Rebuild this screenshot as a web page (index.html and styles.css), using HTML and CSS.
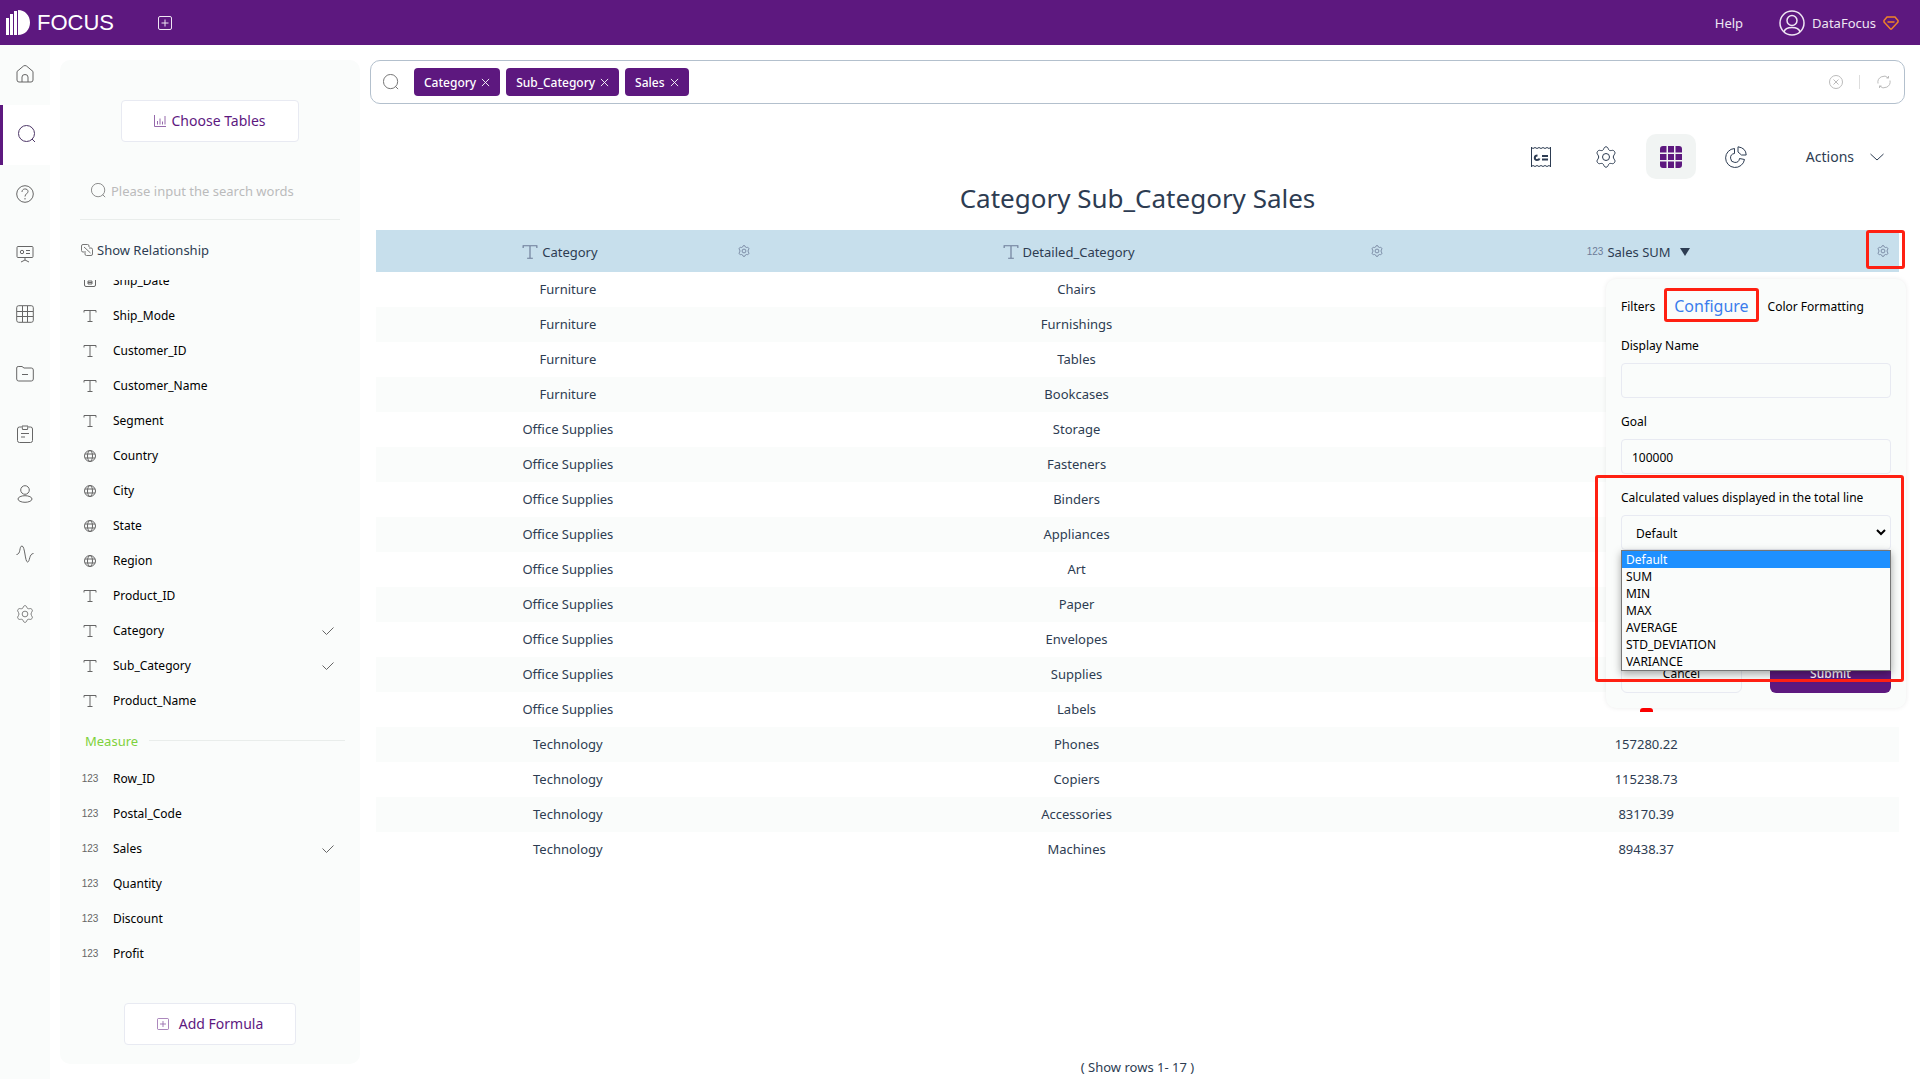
FILE: index.html
```html
<!DOCTYPE html>
<html lang="en">
<head>
<meta charset="utf-8">
<title>DataFocus</title>
<link rel="stylesheet" href="styles.css">
</head>
<body>
<svg class="sprite" aria-hidden="true">
  <symbol id="i-plus" viewBox="0 0 14 14"><rect x=".5" y=".5" width="13" height="13" rx="1.5"/><path d="M7 3.500v7M3.500 7h7"/></symbol>
  <symbol id="i-search" viewBox="0 0 18 18"><circle cx="8.500" cy="8.500" r="8"/><path d="M14 14l3 3"/></symbol>
  <symbol id="i-text" viewBox="0 0 14 14"><path d="M1 3.500V1.500h12v2M7 1.500v11M4.500 12.500h5"/></symbol>
  <symbol id="i-globe" viewBox="0 0 14 14"><circle cx="7" cy="7" r="5.500"/><ellipse cx="7" cy="7" rx="2.500" ry="5.500"/><path d="M2 5h10M2 9h10"/></symbol>
  <symbol id="i-check" viewBox="0 0 12 8"><path d="M.5 3.500l4 4 7-7"/></symbol>
  <symbol id="i-gear" viewBox="0 0 22 22"><path d="M11 .8C12.500.8 13 2 13.500 3.500 14.500 5 16 4.600 17.500 4.300c1.500 0 2.700 1.700 2.500 2.900-.4 1.300-1.700 2.400-1.700 3.800s1.300 2.500 1.700 3.800c.2 1.200-1 2.900-2.500 2.900-1.500-.3-3-.7-4 .8-.5 1.500-1 2.700-2.500 2.700s-2-1.200-2.500-2.700c-1-1.500-2.500-1.100-4-.8-1.500 0-2.700-1.700-2.500-2.900.4-1.300 1.700-2.400 1.700-3.800S2.400 8.500 2 7.200c-.2-1.200 1-2.900 2.500-2.900 1.500.3 3 .7 4-.8C9 2 9.500.8 11 .8z"/><circle cx="11" cy="11" r="3.500"/></symbol>
</svg>

<header class="topbar">
  <a class="brand" href="#" aria-label="Focus home">
    <svg class="brand-mark" viewBox="0 0 24 25"><path d="M0 8h3v17H0zM4 4h3v21H4zM8 1h3v24H8zM12 0c7 0 12 5.500 12 12.500S19 25 12 25z"/></svg>
    <span>FOCUS</span>
  </a>
  <button class="bare new-tab" aria-label="New"><svg class="icon s14"><use href="#i-plus"/></svg></button>
  <a class="help" href="#">Help</a>
  <a class="account" href="#">
    <svg class="icon avatar" viewBox="0 0 26 26"><circle cx="13" cy="13" r="12"/><circle cx="13" cy="10.500" r="5"/><path d="M5 22c1-4 5-4.500 8-4.500s7 .5 8 4.500"/></svg>
    <span>DataFocus</span>
    <svg class="icon gem" viewBox="0 0 16 14"><path d="M4 1h8l3 3.500v1.500L8.500 13h-1L1 6V4.500zM4.500 6h7"/></svg>
  </a>
</header>

<div class="shell">
  <nav class="rail" aria-label="Main">
    <a href="#" aria-label="Home"><svg class="icon s18" viewBox="0 0 18 18"><path d="M1 6.500L7.500 1q1.500-1 3 0L17 6.500V15q0 2-2 2H3q-2 0-2-2zM6 17v-5q0-2.500 3-2.500t3 2.500v5"/></svg></a>
    <a href="#" class="current" aria-label="Search"><svg class="icon s18"><use href="#i-search"/></svg></a>
    <a href="#" aria-label="Questions"><svg class="icon s18" viewBox="0 0 18 18"><circle cx="9" cy="9" r="8.300"/><path d="M6 7c0-4 6-4 6-.5C12 8.500 9 9 9 11.500M9 13v1.500"/></svg></a>
    <a href="#" aria-label="Boards"><svg class="icon s18" viewBox="0 0 18 18"><rect x="1" y="1.500" width="16" height="11" rx="1"/><circle cx="6" cy="7" r="1.700"/><path d="M10 5.500h4M10 8.500h4M9 12.500V15M5 17l4-2 4 2"/></svg></a>
    <a href="#" aria-label="Tables"><svg class="icon s18" viewBox="0 0 18 18"><rect x=".7" y=".7" width="16.600" height="16.600" rx="2"/><path d="M6.500 1v16M11.500 1v16M1 6.500h16M1 11.500h16"/></svg></a>
    <a href="#" aria-label="Folders"><svg class="icon s18" viewBox="0 0 18 18"><path d="M.7 3q0-1.500 1.500-1.500H6l2 1.500h7.300q2 0 2 2v9q0 2-2 2H2.700q-2 0-2-2zM6 9.500h6"/></svg></a>
    <a href="#" aria-label="Reports"><svg class="icon s18" viewBox="0 0 18 18"><path d="M5.500 2H3.500Q1.500 2 1.500 4v11.500q0 2 2 2h11q2 0 2-2V4q0-2-2-2h-2M6 1h6l-.5 3.500h-5zM5 8.500h8M5 12h4"/></svg></a>
    <a href="#" aria-label="Users"><svg class="icon s18" viewBox="0 0 18 18"><circle cx="9" cy="5" r="4.300"/><ellipse cx="9" cy="14" rx="7" ry="3.300"/></svg></a>
    <a href="#" aria-label="Activity"><svg class="icon s18" viewBox="0 0 18 18"><path d="M.5 9.500C5 9.500 3 1 6 1s3 16 5.500 16S13 8.500 17.500 8.500"/></svg></a>
    <a href="#" aria-label="Settings"><svg class="icon s18"><use href="#i-gear"/></svg></a>
  </nav>

  <aside class="panel">
    <button class="outline choose">
      <svg class="icon s12" viewBox="0 0 12 12"><path d="M.5 0v11.500H12M3.500 9.500V6M6 9.500V3.500M8.500 9.500V6.500M11 9.500V1"/></svg>
      Choose Tables
    </button>
    <label class="find">
      <svg class="icon s15"><use href="#i-search"/></svg>
      <input type="text" placeholder="Please input the search words" aria-label="Search columns">
    </label>
    <a class="relation" href="#">
      <svg class="icon s12" viewBox="0 0 12 12"><path d="M3 8H2Q.5 8 .5 6.500V2Q.5.500 2 .5h4.500Q8 .5 8 2v1M3 3l6.500 6M4 7v3q0 1.500 1.500 1.500H10q1.500 0 1.500-1.500V5.500Q11.500 4 10 4H8"/></svg>
      Show Relationship
    </a>
    <div class="columns">
      <ul class="fields first">
        <li><svg class="icon s14" viewBox="0 0 14 14"><rect x="1.500" y="1.500" width="11" height="11" rx="1.500"/><path d="M2 4.500h10M5 7h4v3H5zM5 8.500h4"/></svg>Ship_Date</li>
        <li><svg class="icon s14"><use href="#i-text"/></svg>Ship_Mode</li>
        <li><svg class="icon s14"><use href="#i-text"/></svg>Customer_ID</li>
        <li><svg class="icon s14"><use href="#i-text"/></svg>Customer_Name</li>
        <li><svg class="icon s14"><use href="#i-text"/></svg>Segment</li>
        <li><svg class="icon s14"><use href="#i-globe"/></svg>Country</li>
        <li><svg class="icon s14"><use href="#i-globe"/></svg>City</li>
        <li><svg class="icon s14"><use href="#i-globe"/></svg>State</li>
        <li><svg class="icon s14"><use href="#i-globe"/></svg>Region</li>
        <li><svg class="icon s14"><use href="#i-text"/></svg>Product_ID</li>
        <li><svg class="icon s14"><use href="#i-text"/></svg>Category<svg class="icon tick"><use href="#i-check"/></svg></li>
        <li><svg class="icon s14"><use href="#i-text"/></svg>Sub_Category<svg class="icon tick"><use href="#i-check"/></svg></li>
        <li><svg class="icon s14"><use href="#i-text"/></svg>Product_Name</li>
      </ul>
      <h2 class="group">Measure</h2>
      <ul class="fields">
        <li><span class="num">123</span>Row_ID</li>
        <li><span class="num">123</span>Postal_Code</li>
        <li><span class="num">123</span>Sales<svg class="icon tick"><use href="#i-check"/></svg></li>
        <li><span class="num">123</span>Quantity</li>
        <li><span class="num">123</span>Discount</li>
        <li><span class="num">123</span>Profit</li>
      </ul>
    </div>
    <button class="outline formula"><svg class="icon s12"><use href="#i-plus"/></svg>Add Formula</button>
  </aside>

  <main class="main">
    <div class="query">
      <svg class="icon s16"><use href="#i-search"/></svg>
      <div class="tags">
        <button class="tag">Category<svg class="icon s9" viewBox="0 0 10 10"><path d="M1 1l8 8M9 1l-8 8"/></svg></button>
        <button class="tag">Sub_Category<svg class="icon s9" viewBox="0 0 10 10"><path d="M1 1l8 8M9 1l-8 8"/></svg></button>
        <button class="tag">Sales<svg class="icon s9" viewBox="0 0 10 10"><path d="M1 1l8 8M9 1l-8 8"/></svg></button>
      </div>
      <button class="bare" aria-label="Clear"><svg class="icon s14" viewBox="0 0 14 14"><circle cx="7" cy="7" r="6.500"/><path d="M4.500 4.500l5 5M9.500 4.500l-5 5"/></svg></button>
      <span class="divider"></span>
      <button class="bare" aria-label="Refresh"><svg class="icon s14" viewBox="0 0 14 14"><path d="M1 8.500A6.200 6.200 0 0 1 11.500 3V1M11.500 3h-2M13 5.500A6.200 6.200 0 0 1 2.500 11v2M2.500 11h2"/></svg></button>
    </div>

    <div class="tools">
      <button class="tool" aria-label="Formula"><svg class="icon s22" viewBox="0 0 22 22"><path d="M1.500 1v20M20.500 1v20M1.500 1.500l1.500 1 2-1 2 1 2-1 2 1 2-1 2 1 2-1 2 1 1.500-1M1.500 20.500l1.500-1 2 1 2-1 2 1 2-1 2 1 2-1 2 1 2-1 1.500 1"/><path class="thick" d="M7.500 9.500C4 9.500 4 14 7 14q2 0 2.500-1.500M12 10h6M12 13.500h6"/></svg></button>
      <button class="tool" aria-label="Settings"><svg class="icon s22"><use href="#i-gear"/></svg></button>
      <button class="tool on" aria-label="Table view"><svg class="s22" viewBox="0 0 22 22"><path d="M3 0h3.500v6.500H0V3q0-3 3-3zM8 0h6v6.500H8zM15.500 0H19q3 0 3 3v3.500h-6.500zM0 8h6.500v6H0zM8 8h6v6H8zM15.500 8H22v6h-6.500zM0 15.500h6.500V22H3q-3 0-3-3zM8 15.500h6V22H8zM15.500 15.500H22V19q0 3-3 3h-3.500z"/></svg></button>
      <button class="tool" aria-label="Chart view"><svg class="icon s22" viewBox="0 0 22 22"><path d="M9.500 2.500A9.500 9.500 0 1 0 19.500 13.500L14.500 12.500A4.500 4.500 0 1 1 9.500 7.500zM13 .8V6l3.500 3h4.700Q21 2 13 .8z"/></svg></button>
      <button class="actions">Actions<svg class="icon" viewBox="0 0 14 8" width="14" height="8"><path d="M.5 1L7 7l6.500-6"/></svg></button>
    </div>

    <h1 class="title">Category Sub_Category Sales</h1>

    <div class="grid-wrap">
      <table class="grid">
        <colgroup><col class="c1"><col class="c2"><col class="c3"></colgroup>
        <thead>
          <tr>
            <th><div class="head"><span class="label"><svg class="icon s16"><use href="#i-text"/></svg>Category</span><button class="bare" aria-label="Configure Category"><svg class="icon s12"><use href="#i-gear"/></svg></button></div></th>
            <th><div class="head"><span class="label"><svg class="icon s16"><use href="#i-text"/></svg>Detailed_Category</span><button class="bare" aria-label="Configure Detailed_Category"><svg class="icon s12"><use href="#i-gear"/></svg></button></div></th>
            <th><div class="head"><span class="label"><span class="num">123</span>Sales SUM<svg class="caret" viewBox="0 0 10 8"><path d="M0 0h10L5 8z"/></svg></span><button class="bare marked" aria-label="Configure Sales"><svg class="icon s12"><use href="#i-gear"/></svg></button></div></th>
          </tr>
        </thead>
        <tbody>
          <tr><td>Furniture</td><td>Chairs</td><td></td></tr>
          <tr><td>Furniture</td><td>Furnishings</td><td></td></tr>
          <tr><td>Furniture</td><td>Tables</td><td></td></tr>
          <tr><td>Furniture</td><td>Bookcases</td><td></td></tr>
          <tr><td>Office Supplies</td><td>Storage</td><td></td></tr>
          <tr><td>Office Supplies</td><td>Fasteners</td><td></td></tr>
          <tr><td>Office Supplies</td><td>Binders</td><td></td></tr>
          <tr><td>Office Supplies</td><td>Appliances</td><td></td></tr>
          <tr><td>Office Supplies</td><td>Art</td><td></td></tr>
          <tr><td>Office Supplies</td><td>Paper</td><td></td></tr>
          <tr><td>Office Supplies</td><td>Envelopes</td><td></td></tr>
          <tr><td>Office Supplies</td><td>Supplies</td><td></td></tr>
          <tr><td>Office Supplies</td><td>Labels</td><td></td></tr>
          <tr><td>Technology</td><td>Phones</td><td>157280.22</td></tr>
          <tr><td>Technology</td><td>Copiers</td><td>115238.73</td></tr>
          <tr><td>Technology</td><td>Accessories</td><td>83170.39</td></tr>
          <tr><td>Technology</td><td>Machines</td><td>89438.37</td></tr>
        </tbody>
      </table>

      <form class="popover">
        <div class="tabs">
          <button type="button" class="tab">Filters</button>
          <button type="button" class="tab active">Configure</button>
          <button type="button" class="tab">Color Formatting</button>
        </div>
        <label for="display-name">Display Name</label>
        <input id="display-name" type="text">
        <label for="goal">Goal</label>
        <input id="goal" type="text" value="100000">
        <div class="total">
          <label for="total">Calculated values displayed in the total line</label>
          <div class="picker">
            <select id="total"><option>Default</option><option>SUM</option><option>MIN</option><option>MAX</option><option>AVERAGE</option><option>STD_DEVIATION</option><option>VARIANCE</option></select>
            <svg class="icon arrow" viewBox="0 0 10 7"><path d="M1 1l4 4 4-4"/></svg>
            <ul class="options" role="listbox">
              <li role="option" aria-selected="true">Default</li>
              <li role="option">SUM</li>
              <li role="option">MIN</li>
              <li role="option">MAX</li>
              <li role="option">AVERAGE</li>
              <li role="option">STD_DEVIATION</li>
              <li role="option">VARIANCE</li>
            </ul>
          </div>
        </div>
        <div class="buttons">
          <button type="button" class="cancel">Cancel</button>
          <button type="submit" class="submit">Submit</button>
        </div>
      </form>
    </div>

    <p class="count">( Show rows 1- 17 )</p>
  </main>
</div>
</body>
</html>
```
FILE: styles.css
```css
:root {
  --purple: #5d187f;
  --soft: #fafcfb;
  --line: #e8eaf2;
  --ink: #2d3c52;
  --mark: #ff2012;
}

* { box-sizing: border-box; }

body {
  margin: 0;
  min-height: 100vh;
  display: flex;
  flex-direction: column;
  background: #fff;
  color: var(--ink);
  font: 13px/20px "Noto Sans", "Open Sans", sans-serif;
}

button, input, select { font: inherit; color: inherit; }
button { cursor: pointer; }
a { color: inherit; text-decoration: none; }
ul { list-style: none; margin: 0; padding: 0; }

.sprite { position: absolute; width: 0; height: 0; }
.icon { fill: none; stroke: currentColor; stroke-width: 1; flex: none; }
.s9 { width: 9px; height: 9px; }
.s12 { width: 12px; height: 12px; }
.s14 { width: 14px; height: 14px; }
.s15 { width: 15px; height: 15px; }
.s16 { width: 16px; height: 16px; }
.s18 { width: 18px; height: 18px; }
.s22 { width: 22px; height: 22px; }
.thick { stroke-width: 2; }

.bare { border: 0; padding: 0; background: none; display: flex; align-items: center; justify-content: center; }

/* top bar */
.topbar {
  height: 45px;
  padding: 0 21px 0 6px;
  display: flex;
  align-items: center;
  background: var(--purple);
  color: #efe6f3;
}
.brand { display: flex; align-items: center; gap: 7px; color: #fff; font: 22px/24px "Liberation Sans", Arial, sans-serif; }
.brand-mark { width: 24px; height: 25px; fill: #fff; }
.new-tab { margin-left: 44px; }
.help { margin-left: auto; }
.account { margin-left: 36px; display: flex; align-items: center; }
.avatar { width: 26px; height: 26px; margin-right: 7px; stroke-width: 1.500; }
.gem { width: 16px; height: 14px; margin-left: 7px; color: #f08228; stroke-width: 1.500; }

.shell { flex: 1; display: flex; }

/* icon rail */
.rail { width: 50px; background: var(--soft); color: #666; }
.rail a { height: 60px; padding-bottom: 2px; display: flex; align-items: center; justify-content: center; }
.rail .current { background: #fff; border-left: 3px solid var(--purple); color: #4c3566; }

/* column panel */
.panel {
  width: 300px;
  margin: 15px 10px;
  padding: 40px 15px 19px 20px;
  display: flex;
  flex-direction: column;
  background: var(--soft);
  border-radius: 10px;
}
.outline {
  height: 42px;
  display: flex;
  align-items: center;
  justify-content: center;
  background: #fff;
  border: 1px solid var(--line);
  border-radius: 4px;
  color: var(--purple);
  font-size: 14px;
}
.outline .icon { opacity: .65; }
.choose { width: 178px; margin-left: 41px; gap: 5px; }
.formula { width: 172px; margin: auto 0 0 44px; gap: 10px; }
.find {
  width: 260px;
  height: 54px;
  margin-top: 24px;
  padding: 0 10px 4px 11px;
  display: flex;
  align-items: center;
  gap: 5px;
  border-bottom: 1px solid #e9edeb;
  color: #777;
}
.find input { flex: 1; min-width: 0; border: 0; padding: 0; background: none; outline: 0; }
.find input::placeholder { color: #bbb; opacity: 1; }
.relation { height: 60px; padding-left: 1px; display: flex; align-items: center; gap: 4px; }
.relation .icon { color: #777; }
.columns { overflow: hidden; }
.fields li { height: 35px; padding: 0 11px 0 3px; display: flex; align-items: center; color: #000; font-size: 12px; }
.fields .icon { color: #666; }
.fields.first { margin-top: -17px; }
.fields li > :first-child { width: 14px; margin-right: 16px; }
.fields .tick { width: 12px; height: 8px; margin-left: auto; }
.num { color: #666; font: 10px/14px "Liberation Sans", Arial, sans-serif; }
.fields .num { display: flex; justify-content: center; }
.group { margin: 0; height: 43px; padding: 2px 0 0 5px; display: flex; align-items: center; gap: 11px; color: #7ed13b; font-size: 13px; font-weight: 400; }
.group::after { content: ""; flex: 1; border-top: 1px solid #e9edeb; }

/* work area */
.main { flex: 1; min-width: 0; padding: 15px 15px 2px 0; display: flex; flex-direction: column; }
.query {
  height: 44px;
  padding: 0 13px 0 12px;
  display: flex;
  align-items: center;
  border: 1px solid #b3c0cd;
  border-radius: 10px;
  color: #666;
}
.query .bare { color: #bbb; }
.tags { flex: 1; margin-left: 15px; display: flex; gap: 6px; }
.tag {
  height: 28px;
  padding: 2px 10px 0;
  display: flex;
  align-items: center;
  gap: 5px;
  border: 0;
  border-radius: 4px;
  background: var(--purple);
  color: #fff;
  font-size: 12px;
  font-weight: 500;
}
.tag .icon { margin-bottom: 2px; }
.divider { width: 1px; height: 14px; margin: 0 17px 0 16px; background: #ddd; }

.tools { height: 45px; margin-top: 30px; padding-right: 21px; display: flex; justify-content: flex-end; gap: 15px; }
.tool { width: 50px; border: 0; border-radius: 10px; padding: 0; background: none; display: flex; align-items: center; justify-content: center; }
.tool.on { background: #f1f4f3; fill: var(--purple); }
.actions { margin-left: 30px; padding: 0; border: 0; background: none; display: flex; align-items: center; gap: 16px; font-size: 14px; }

.title { margin: 0; height: 51px; padding-bottom: 13px; display: flex; align-items: center; justify-content: center; font-size: 26px; font-weight: 400; }

.grid-wrap { position: relative; padding: 0 6px; }
.grid { width: 100%; table-layout: fixed; border-collapse: collapse; text-align: center; }
.c1 { width: 25.2%; }
.c2 { width: 41.6%; }
.grid th { height: 42px; padding: 0 8px; background: #c7dfec; font-weight: 400; }
.grid td { height: 35px; padding: 0 0 2px; }
.grid tbody tr:nth-child(even) { background: var(--soft); }
.head { display: flex; align-items: center; }
.head .bare { width: 16px; height: 16px; color: #6d7c98; }
.head .icon { color: #6d7c98; }
.head .bare .icon { stroke-width: 1.500; }
.head .num { color: #6d7c98; }
.label { flex: 1; padding-top: 1px; display: flex; align-items: center; justify-content: center; gap: 4px; }
.caret { width: 10px; height: 8px; margin-left: 5px; fill: var(--ink); }

/* red attention frames lie over the content they point to */
.marked, .tab.active, .total { position: relative; }
.marked::after, .tab.active::after, .total::after {
  content: "";
  position: absolute;
  z-index: 3;
  border: 3px solid var(--mark);
  border-radius: 3px;
  pointer-events: none;
}
.marked::after { inset: -13px -14px -10px -9px; }
.tab.active::after { inset: -6px -10px -4px -10px; }
.total::after { inset: -13px -13px -132px -26px; }

.popover {
  position: absolute;
  top: 49px;
  right: -1px;
  width: 300px;
  padding: 15px 15px 15px;
  background: var(--soft);
  border-radius: 10px;
  box-shadow: 0 0 5px rgba(0, 0, 0, .08);
  color: #000;
  font-size: 12px;
}
.popover::after {
  content: "";
  position: absolute;
  top: 100%;
  left: 34px;
  width: 13px;
  height: 4px;
  border-radius: 3px 3px 0 0;
  background: #fb0000;
}
.tabs { height: 24px; display: flex; align-items: center; gap: 19px; white-space: nowrap; }
.tab { border: 0; padding: 2px 0 0; background: none; }
.tab.active { padding: 0; font-size: 16px; line-height: 24px; color: #3b7cec; }
.popover label { display: block; margin: 18px 0 7px; }
.popover input, .popover select {
  display: block;
  width: 100%;
  height: 35px;
  padding: 1px 10px 0;
  background: var(--soft);
  border: 1px solid var(--line);
  border-radius: 4px;
}
.popover input + label { margin: 14px 0 7px; }
.popover .total label { margin: 14px 0 7px; }
.picker { position: relative; }
.popover select { appearance: none; padding: 2px 14px 0; }
.arrow { position: absolute; top: 14px; right: 5px; width: 10px; height: 7px; stroke-width: 2; }
.options {
  position: absolute;
  z-index: 2;
  top: 100%;
  left: 0;
  right: 0;
  background: var(--soft);
  border: 1px solid #767676;
  box-shadow: 0 3px 8px rgba(0, 0, 0, .35);
}
.options li { height: 17px; padding: 0 4px; line-height: 17px; }
.options [aria-selected] { background: #1e90ff; color: #fff; }
.buttons { margin-top: 108px; display: flex; justify-content: space-between; }
.buttons button { width: 121px; height: 35px; padding: 0 0 4px; border-radius: 6px; }
.cancel { background: var(--soft); border: 1px solid var(--line); }
.submit { background: var(--purple); border: 0; color: #fff; font-weight: 500; }

.count { margin: auto 0 0; text-align: center; }
```
